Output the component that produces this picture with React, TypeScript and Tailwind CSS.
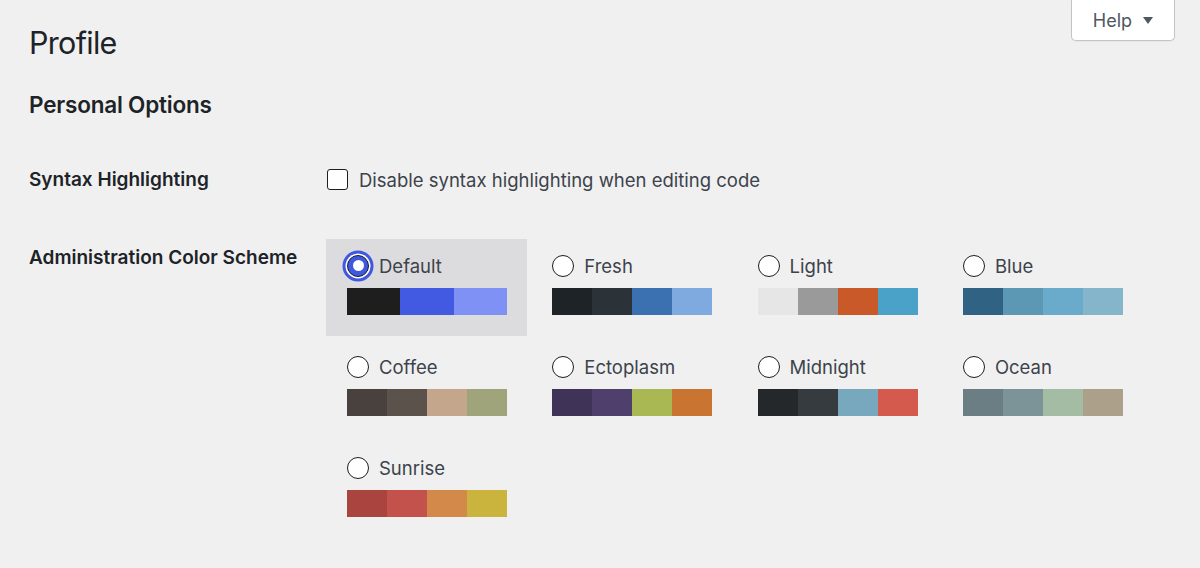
import type { ReactNode } from 'react'

interface Scheme {
  name: string
  colors: string[]
}

// 配色方案（颜色取自截图）
const SCHEMES: Scheme[] = [
  { name: 'Default', colors: ['#1e1e1e', '#4259e2', '#8091f5'] },
  { name: 'Fresh', colors: ['#1d2327', '#2c3338', '#3b71b0', '#7eaae0'] },
  { name: 'Light', colors: ['#e6e6e6', '#9a9a9a', '#c95928', '#4aa2c9'] },
  { name: 'Blue', colors: ['#2f6283', '#5c97b4', '#6aaacb', '#85b5cb'] },
  { name: 'Coffee', colors: ['#48413d', '#5a524b', '#c4a68c', '#9fa47a'] },
  { name: 'Ectoplasm', colors: ['#3f3457', '#4f3f6c', '#a9b853', '#c97431'] },
  { name: 'Midnight', colors: ['#25282b', '#363b3f', '#78a8bd', '#d45a4e'] },
  { name: 'Ocean', colors: ['#6b7e84', '#7c9398', '#a4bca3', '#aca08a'] },
  { name: 'Sunrise', colors: ['#a9443f', '#c4524c', '#d3894a', '#cbb43e'] },
]

function Radio({ checked }: { checked: boolean }) {
  if (checked) {
    return (
      <span className="w-[22px] h-[22px] shrink-0 rounded-full border-[1.5px] border-[#1e1e1e] bg-[#3f58e2] flex items-center justify-center shadow-[0_0_0_1.5px_#ffffff,0_0_0_4.5px_#3f58e2]">
        <span className="w-[11px] h-[11px] rounded-full bg-white" />
      </span>
    )
  }
  return <span className="w-[22px] h-[22px] shrink-0 rounded-full border-[1.5px] border-[#1e1e1e] bg-white" />
}

function SchemeOption({ scheme, selected }: { scheme: Scheme; selected: boolean }) {
  return (
    <div className={`h-[97px] pt-[16px] pl-[21px] ${selected ? 'bg-[#dcdcde]' : ''}`}>
      <div className="flex items-center gap-[10px] h-[22px]">
        <Radio checked={selected} />
        <span className="text-[18.5px] leading-[24px] text-[#3c434a]">{scheme.name}</span>
      </div>
      <div className="mt-[11px] flex w-[160px] h-[27px]">
        {scheme.colors.map((c) => (
          <div key={c} className="flex-1 h-full" style={{ backgroundColor: c }} />
        ))}
      </div>
    </div>
  )
}

function Row({ label, children, labelClass = '' }: { label: string; children: ReactNode; labelClass?: string }) {
  return (
    <div className="grid grid-cols-[298px_1fr]">
      <div className={`text-[19px] leading-[24px] font-semibold text-[#1d2327] ${labelClass}`}>{label}</div>
      <div>{children}</div>
    </div>
  )
}

export default function App() {
  return (
    <div className="min-h-[568px] bg-[#f0f0f1] font-[Inter,'Noto_Sans',sans-serif] pl-[29px] pb-[30px]">
      <div className="flex justify-between items-start pr-[25px]">
        <h1 className="mt-[23px] text-[30.5px] leading-[40px] font-normal tracking-[-0.7px] text-[#1d2327]">Profile</h1>
        <button className="h-[41px] w-[104px] bg-white border border-t-0 border-[#c3c4c7] rounded-b-[5px] flex items-center justify-center gap-[11px] text-[18px] text-[#50575e] shadow-[0_1px_1px_rgba(0,0,0,0.04)]">
          <span>Help</span>
          <svg width="10" height="7" viewBox="0 0 10 7" className="mt-[1px]">
            <path d="M0 0h10L5 7z" fill="#50575e" />
          </svg>
        </button>
      </div>

      <h2 className="-mt-[1px] pt-[28px] text-[22.5px] leading-[30px] font-semibold tracking-[-0.2px] text-[#1d2327]">Personal Options</h2>

      <div className="mt-[47.5px]">
        <Row label="Syntax Highlighting">
          <label className="flex items-center gap-[11px] h-[24px]">
            <span className="w-[21px] h-[21px] rounded-[3px] border-[1.5px] border-[#1e1e1e] bg-white" />
            <span className="text-[18.5px] leading-[24px] text-[#3c434a]">Disable syntax highlighting when editing code</span>
          </label>
        </Row>
      </div>

      <div className="mt-[47px]">
        <Row label="Administration Color Scheme" labelClass="pt-[7.5px]">
          <div className="-ml-[1px] grid grid-cols-[repeat(4,201px)] gap-x-[4.3px] gap-y-[4px]">
            {SCHEMES.map((s) => (
              <SchemeOption key={s.name} scheme={s} selected={s.name === 'Default'} />
            ))}
          </div>
        </Row>
      </div>
    </div>
  )
}
